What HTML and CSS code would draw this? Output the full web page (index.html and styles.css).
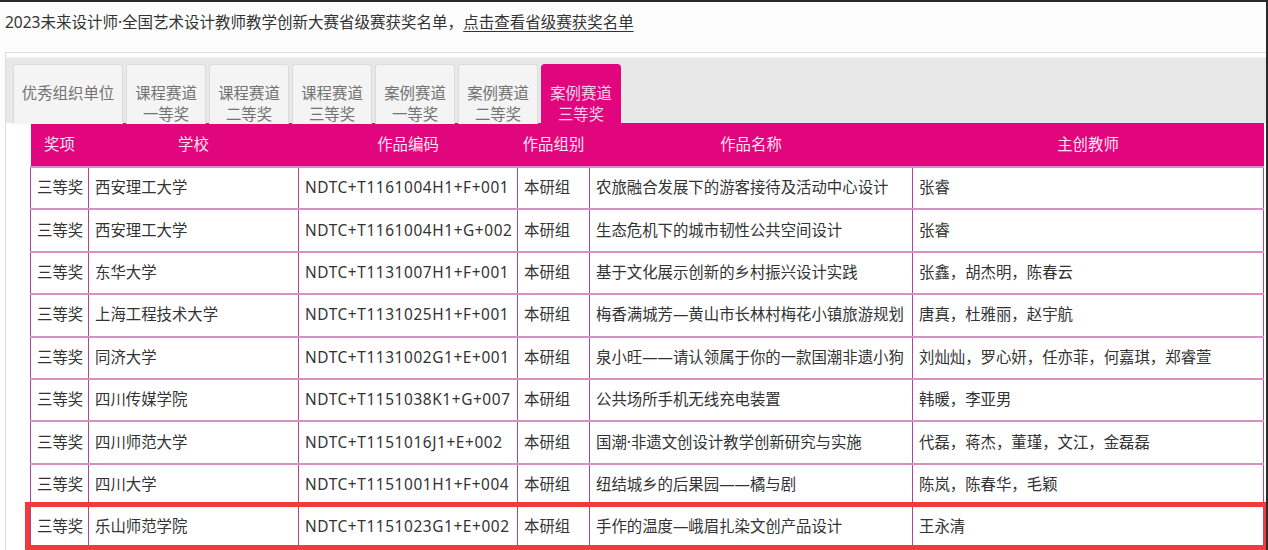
FILE: index.html
```html
<!DOCTYPE html>
<html lang="zh-CN">
<head>
<meta charset="utf-8">
<title>获奖名单</title>
<link rel="stylesheet" href="styles.css">
</head>
<body>
<div class="page">
  <div class="title">2023未来设计师·全国艺术设计教师教学创新大赛省级赛获奖名单，<a class="link" href="#">点击查看省级赛获奖名单</a></div>
  <div class="panel">
    <div class="tabbar">
      <div class="tab tab-wide">优秀组织单位</div>
      <div class="tab">课程赛道<br>一等奖</div>
      <div class="tab">课程赛道<br>二等奖</div>
      <div class="tab">课程赛道<br>三等奖</div>
      <div class="tab tab-n">案例赛道<br>一等奖</div>
      <div class="tab tab-n">案例赛道<br>二等奖</div>
      <div class="tab active">案例赛道<br>三等奖</div>
    </div>
    <div class="table-wrap">
      <table class="list">
        <colgroup>
          <col class="c1"><col class="c2"><col class="c3"><col class="c4"><col class="c5"><col class="c6">
        </colgroup>
        <thead>
          <tr><th>奖项</th><th>学校</th><th>作品编码</th><th>作品组别</th><th>作品名称</th><th>主创教师</th></tr>
        </thead>
        <tbody>
          <tr><td>三等奖</td><td>西安理工大学</td><td class="code">NDTC+T1161004H1+F+001</td><td>本研组</td><td>农旅融合发展下的游客接待及活动中心设计</td><td>张睿</td></tr>
          <tr><td>三等奖</td><td>西安理工大学</td><td class="code">NDTC+T1161004H1+G+002</td><td>本研组</td><td>生态危机下的城市韧性公共空间设计</td><td>张睿</td></tr>
          <tr><td>三等奖</td><td>东华大学</td><td class="code">NDTC+T1131007H1+F+001</td><td>本研组</td><td>基于文化展示创新的乡村振兴设计实践</td><td>张鑫，胡杰明，陈春云</td></tr>
          <tr><td>三等奖</td><td>上海工程技术大学</td><td class="code">NDTC+T1131025H1+F+001</td><td>本研组</td><td>梅香满城芳—黄山市长林村梅花小镇旅游规划</td><td>唐真，杜雅丽，赵宇航</td></tr>
          <tr><td>三等奖</td><td>同济大学</td><td class="code">NDTC+T1131002G1+E+001</td><td>本研组</td><td>泉小旺——请认领属于你的一款国潮非遗小狗</td><td>刘灿灿，罗心妍，任亦菲，何嘉琪，郑睿萱</td></tr>
          <tr><td>三等奖</td><td>四川传媒学院</td><td class="code">NDTC+T1151038K1+G+007</td><td>本研组</td><td>公共场所手机无线充电装置</td><td>韩暖，李亚男</td></tr>
          <tr><td>三等奖</td><td>四川师范大学</td><td class="code">NDTC+T1151016J1+E+002</td><td>本研组</td><td>国潮·非遗文创设计教学创新研究与实施</td><td>代磊，蒋杰，董瑾，文江，金磊磊</td></tr>
          <tr><td>三等奖</td><td>四川大学</td><td class="code">NDTC+T1151001H1+F+004</td><td>本研组</td><td>纽结城乡的后果园——橘与剧</td><td>陈岚，陈春华，毛颖</td></tr>
          <tr><td>三等奖</td><td>乐山师范学院</td><td class="code">NDTC+T1151023G1+E+002</td><td>本研组</td><td>手作的温度—峨眉扎染文创产品设计</td><td>王永清</td></tr>
        </tbody>
      </table>
    </div>
    <div class="highlight"></div>
  </div>
</div>
</body>
</html>
```

FILE: styles.css
```css
html, body {
  margin: 0;
  padding: 0;
  background: #fff;
}
body {
  font-family: "Noto Sans", "Noto Sans CJK SC", sans-serif;
  color: #333;
  overflow: hidden;
}
.page {
  width: 1268px;
  height: 550px;
  box-sizing: border-box;
  border-top: 2px solid #2a2a2a;
  border-right: 2px solid #2a2a2a;
  background: #fdfdfd;
  overflow: hidden;
}
.title {
  height: 50px;
  box-sizing: border-box;
  padding: 9px 0 0 5px;
  font-size: 15.5px;
  line-height: 22px;
  color: #333;
  white-space: nowrap;
}
.link {
  color: #333;
  text-decoration: underline;
  text-underline-offset: 3px;
}
.panel {
  position: relative;
  margin-left: 5px;
  border: 1px solid #dedede;
  border-right: none;
  border-bottom: none;
  padding-top: 4px;
  background: #fff;
  height: 520px;
}
.tabbar {
  display: flex;
  gap: 3px;
  align-items: flex-start;
  height: 66px;
  box-sizing: border-box;
  padding: 6px 0 0 7px;
  background: #e8e8e8;
  border-top: 1px solid #f2f2f2;
}
.tab {
  width: 80px;
  height: 60px;
  box-sizing: border-box;
  flex: none;
  padding-top: 18px;
  text-align: center;
  font-size: 15.4px;
  line-height: 21px;
  color: #737373;
  background: #f4f4f4;
  border: 1px solid #dcdcdc;
  border-bottom: none;
  border-radius: 3px 3px 0 0;
  overflow: hidden;
}
.tab-wide {
  width: 110px;
}
.tab-n {
  width: 80px;
}
.tab.active {
  background: #e1067d;
  border-color: #e1067d;
  color: #fcd0e8;
  border-radius: 4px 4px 0 0;
}
.table-wrap {
  padding-left: 24px;
}
.list {
  width: 1233px;
  table-layout: fixed;
  border-collapse: collapse;
  font-size: 15.4px;
}
.c1 { width: 58px; }
.c2 { width: 210px; }
.c3 { width: 219px; }
.c4 { width: 72px; }
.c5 { width: 323px; }
.c6 { width: 351px; }
.list th {
  height: 43px;
  padding: 0;
  background: #e1067d;
  color: #ffe4f2;
  font-weight: normal;
  text-align: center;
  line-height: 20px;
}
.list td {
  height: 40.4px;
  padding: 0 2px 0 6px;
  line-height: 20px;
  white-space: nowrap;
  overflow: hidden;
  color: #333;
  border-left: 1px solid #a8479a;
  border-right: 1px solid #a8479a;
  border-top: 2px solid #d88fc2;
  border-bottom: 2px solid #d88fc2;
  background: #fff;
}
.list td.code {
  letter-spacing: 0.6px;
}
.highlight {
  position: absolute;
  left: 19px;
  top: 449px;
  width: 1244px;
  height: 48px;
  box-sizing: border-box;
  border: 5px solid #f23a3d;
  pointer-events: none;
}
```
